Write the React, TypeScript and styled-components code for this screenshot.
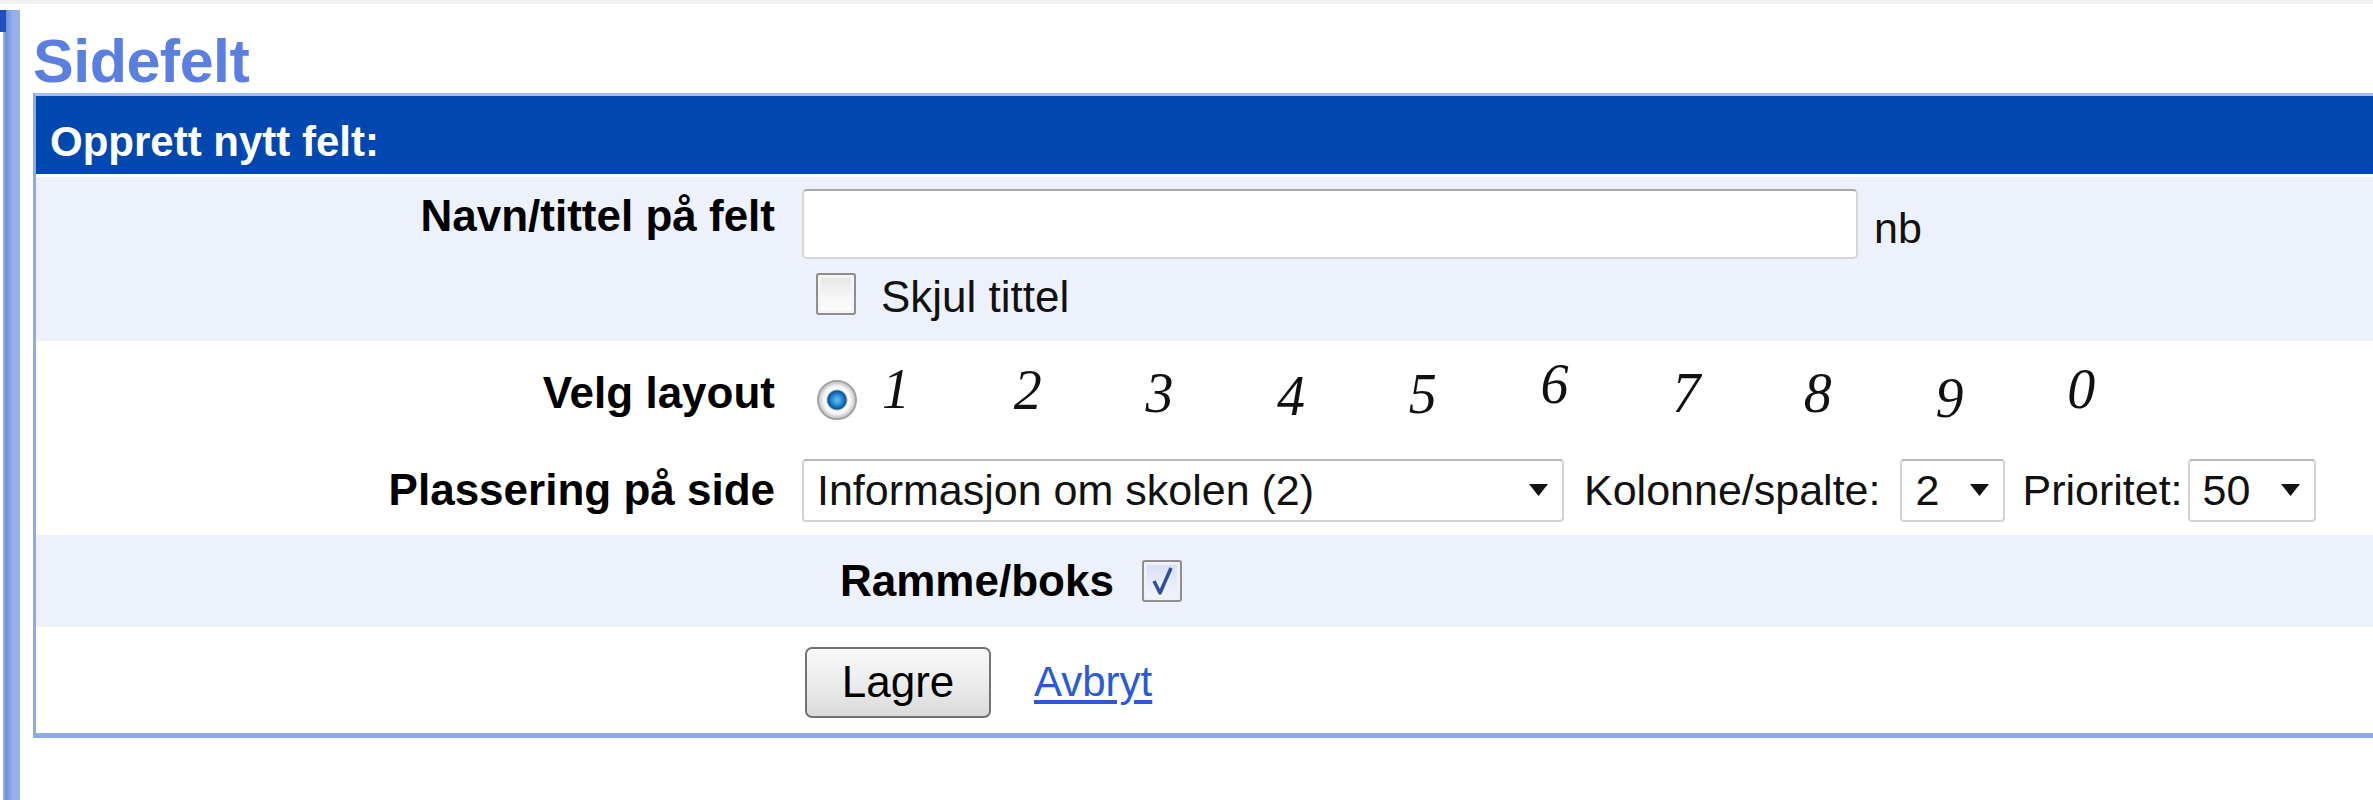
import { createGlobalStyle } from "styled-components"
import styled from "styled-components"

const GlobalStyle = createGlobalStyle`
  html, body {
    margin: 0;
    padding: 0;
    background: #fff;
    overflow: hidden;
  }
  body {
    font-family: "Liberation Sans", Arial, sans-serif;
    color: #111;
  }
`

const Page = styled.div`
  display: flex;
  height: 800px;
  border-top: 4px solid #f1f1f1;
  box-sizing: border-box;
  overflow: hidden;
`

const SideRail = styled.div`
  flex: 0 0 17px;
  margin: 6px 0 0 3px;
  background: linear-gradient(90deg, #a2b9ec 0, #6c8fdd 3px, #7f9ee3 6px, #94aee8 9px, #9bb3ea 17px);
  position: relative;

  &::before {
    content: "";
    position: absolute;
    left: -3px;
    top: 0;
    width: 6px;
    height: 22px;
    background: #1f4fbf;
  }
`

const Main = styled.div`
  flex: 1;
  min-width: 0;
  padding-left: 13px;
`

const Title = styled.h1`
  margin: 27px 0 0;
  height: 60px;
  font-size: 61px;
  line-height: 60px;
  font-weight: bold;
  color: #5b7fe0;
  letter-spacing: -0.5px;
`

const Panel = styled.div`
  margin-top: 2px;
  width: calc(100% + 40px);
  border: 3px solid #8eaae6;
  border-bottom-width: 5px;
  border-top-color: #a8bdee;
`

const PanelHeader = styled.div`
  height: 81px;
  box-sizing: border-box;
  padding: 10px 0 0 14px;
  line-height: 71px;
  background: #0048b0;
  color: #fff;
  font-size: 42px;
  font-weight: bold;
  border-bottom: 3px solid #fff;
`

const FormRow = styled.div<{ $shade?: boolean; $height: number; $align?: string }>`
  display: grid;
  grid-template-columns: 766px 1fr;
  align-items: ${(p) => p.$align ?? "center"};
  height: ${(p) => p.$height}px;
  background: ${(p) => (p.$shade ? "#edf1fb" : "#fff")};
`

const Label = styled.div<{ $top?: number }>`
  padding-right: 27px;
  padding-top: ${(p) => p.$top ?? 0}px;
  text-align: right;
  font-size: 44px;
  line-height: 50px;
  font-weight: bold;
  color: #000;
  white-space: nowrap;
`

const Field = styled.div<{ $top?: number; $indent?: number }>`
  display: flex;
  flex-direction: column;
  padding-top: ${(p) => p.$top ?? 0}px;
  padding-left: ${(p) => p.$indent ?? 0}px;
`

const Inline = styled.div<{ $gap?: number; $mt?: number }>`
  display: flex;
  align-items: center;
  gap: ${(p) => p.$gap ?? 0}px;
  margin-top: ${(p) => p.$mt ?? 0}px;
  font-size: 44px;
  line-height: 50px;
  white-space: nowrap;
`

const TextInput = styled.input`
  width: 1056px;
  height: 70px;
  box-sizing: border-box;
  border: 2px solid #d6d6d6;
  border-top-color: #a9a9a9;
  border-radius: 5px;
  background: #fff;
  font: 43px "Liberation Sans", Arial, sans-serif;
  padding: 0 12px;
  outline: none;
`

const Suffix = styled.span`
  padding: 8px 0 0 16px;
  font-size: 43px;
`

const Box = styled.span<{ $checked?: boolean }>`
  display: inline-flex;
  align-items: center;
  justify-content: center;
  width: 40px;
  height: 42px;
  box-sizing: border-box;
  border: 2px solid #8e8e8e;
  border-radius: 3px;
  background: ${(p) =>
    p.$checked
      ? "linear-gradient(180deg, #d6def0 0%, #e8edf8 60%, #f2f5fb 100%)"
      : "linear-gradient(180deg, #e4e4e4 0%, #f7f7f7 60%, #fdfdfd 100%)"};
  box-shadow: inset 0 0 0 3px ${(p) => (p.$checked ? "#eef1f8" : "#f4f4f4")};
  margin: ${(p) => (p.$checked ? "0" : "-6px 0 0 14px")};
`

const Radio = styled.span`
  display: inline-block;
  width: 40px;
  height: 40px;
  box-sizing: border-box;
  border-radius: 50%;
  border: 2px solid #a3a3a3;
  margin: 14px 0 0 15px;
  background: radial-gradient(
    circle at 50% 50%,
    #6cc6f4 0,
    #2a8fd6 5px,
    #0b5499 9px,
    #9db5c8 10px,
    #ffffff 11px,
    #f3f3f3 14px,
    #cfcfcf 17px
  );
`

const Digits = styled.div`
  display: flex;
  margin-left: 25px;
`

const Digit = styled.span<{ $shift: number }>`
  width: 131.7px;
  font-family: "Liberation Serif", "Times New Roman", serif;
  font-style: italic;
  font-size: 56px;
  line-height: 56px;
  color: #111;
  transform: translateY(${(p) => p.$shift}px);
`

const SelectBox = styled.div<{ $width: number }>`
  display: flex;
  align-items: center;
  justify-content: space-between;
  width: ${(p) => p.$width}px;
  height: 63px;
  box-sizing: border-box;
  padding: 0 14px 0 13px;
  border: 2px solid #d3d3d3;
  border-top-color: #b9b9b9;
  border-radius: 4px;
  background: #fff;
  font-size: 43px;
  color: #111;
`

const Caption = styled.span<{ $left: number; $right: number }>`
  margin: 0 ${(p) => p.$right}px 0 ${(p) => p.$left}px;
  font-size: 43px;
  color: #111;
`

const BoldText = styled.span`
  font-size: 44px;
  font-weight: bold;
  color: #000;
`

const Button = styled.button`
  width: 186px;
  height: 71px;
  margin-top: 4px;
  border: 2px solid #727272;
  border-radius: 7px;
  background: linear-gradient(180deg, #fafafa 0%, #ececec 50%, #dadada 100%);
  font: 44px "Liberation Sans", Arial, sans-serif;
  color: #000;
  padding: 0;
`

const CancelLink = styled.a`
  margin-top: 4px;
  font-size: 42px;
  color: #2a5bd4;
  text-decoration: underline;
  text-underline-offset: 4px;
`

const Arrow = () => (
  <svg width="19" height="12" viewBox="0 0 19 12">
    <path d="M0 0h19L9.5 12z" fill="#111" />
  </svg>
)

const Select = ({ value, width }: { value: string; width: number }) => (
  <SelectBox $width={width}>
    <span>{value}</span>
    <Arrow />
  </SelectBox>
)

const Check = () => (
  <svg width="24" height="30" viewBox="0 0 24 30">
    <path d="M4 15 L10 27 L21 2" fill="none" stroke="#2f4f9c" strokeWidth="3.5" strokeLinejoin="round" />
  </svg>
)

// vertical tweaks so the numerals sit like the old-style figures in the picture
const layouts = [
  { n: "1", shift: -4 },
  { n: "2", shift: -3 },
  { n: "3", shift: 0 },
  { n: "4", shift: 3 },
  { n: "5", shift: 1 },
  { n: "6", shift: -9 },
  { n: "7", shift: 0 },
  { n: "8", shift: 0 },
  { n: "9", shift: 5 },
  { n: "0", shift: -4 },
]

export default function App() {
  return (
    <>
      <GlobalStyle />
      <Page>
        <SideRail />
        <Main>
          <Title>Sidefelt</Title>
          <Panel>
            <PanelHeader>Opprett nytt felt:</PanelHeader>

            <FormRow $shade $height={164} $align="start">
              <Label $top={14}>Navn/tittel på felt</Label>
              <Field $top={12}>
                <Inline>
                  <TextInput type="text" />
                  <Suffix>nb</Suffix>
                </Inline>
                <Inline $gap={25} $mt={13}>
                  <Box />
                  <span>Skjul tittel</span>
                </Inline>
              </Field>
            </FormRow>

            <FormRow $height={104}>
              <Label>Velg layout</Label>
              <Inline>
                <Radio />
                <Digits>
                  {layouts.map((d) => (
                    <Digit key={d.n} $shift={d.shift}>
                      {d.n}
                    </Digit>
                  ))}
                </Digits>
              </Inline>
            </FormRow>

            <FormRow $height={90}>
              <Label>Plassering på side</Label>
              <Inline>
                <Select value="Informasjon om skolen (2)" width={762} />
                <Caption $left={20} $right={20}>
                  Kolonne/spalte:
                </Caption>
                <Select value="2" width={105} />
                <Caption $left={17} $right={5}>
                  Prioritet:
                </Caption>
                <Select value="50" width={128} />
              </Inline>
            </FormRow>

            <FormRow $shade $height={92}>
              <div />
              <Field $indent={38}>
                <Inline $gap={28}>
                  <BoldText>Ramme/boks</BoldText>
                  <Box $checked>
                    <Check />
                  </Box>
                </Inline>
              </Field>
            </FormRow>

            <FormRow $height={106}>
              <div />
              <Field $indent={3}>
                <Inline $gap={43}>
                  <Button type="button">Lagre</Button>
                  <CancelLink href="#">Avbryt</CancelLink>
                </Inline>
              </Field>
            </FormRow>
          </Panel>
        </Main>
      </Page>
    </>
  )
}
